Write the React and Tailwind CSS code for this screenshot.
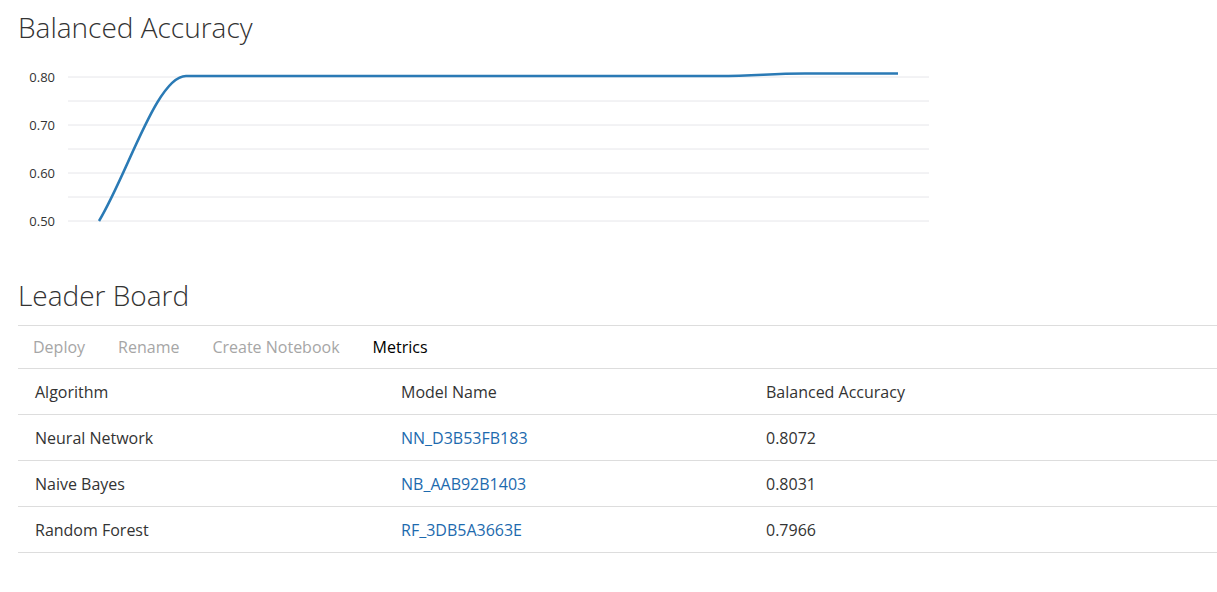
import React from 'react';

const font = { fontFamily: '"Open Sans", "Noto Sans", sans-serif' };

const rows = [
  { algo: 'Neural Network', model: 'NN_D3B53FB183', acc: '0.8072' },
  { algo: 'Naive Bayes', model: 'NB_AAB92B1403', acc: '0.8031' },
  { algo: 'Random Forest', model: 'RF_3DB5A3663E', acc: '0.7966' },
];

const ticks = [
  { y: 18, label: '0.80' },
  { y: 42 },
  { y: 66, label: '0.70' },
  { y: 90 },
  { y: 114, label: '0.60' },
  { y: 138 },
  { y: 162, label: '0.50' },
];

const AccuracyChart = () => (
  <svg width="940" height="175" className="block">
    {ticks.map((t) => (
      <g key={t.y}>
        <line x1="68" x2="929" y1={t.y} y2={t.y} stroke="#e6e6ea" strokeWidth="1" />
        {t.label && (
          <text x="55" y={t.y + 4.5} textAnchor="end" fontSize="13" fill="#333" style={font}>
            {t.label}
          </text>
        )}
      </g>
    ))}
    <path
      d="M99 162 C128 114, 157 17, 186 17 L718 17 C758 17, 768 14.5, 805 14.5 L898 14.5"
      fill="none"
      stroke="#2a7ab5"
      strokeWidth="2.5"
    />
  </svg>
);

export default function App() {
  return (
    <div className="bg-white min-h-screen text-[#333]" style={font}>
      <div className="pl-[18px]">
        <h1 className="text-[28px] font-light leading-none pt-[13px]">Balanced Accuracy</h1>
        <div className="-ml-[18px] mt-[18px]">
          <AccuracyChart />
        </div>

        <h2 className="text-[28px] font-light leading-none mt-[47px]">Leader Board</h2>

        <div className="mt-[16px] border-t border-[#ddd] h-[43px] flex items-center gap-[33px] px-[15px] text-[16px]">
          <span className="text-[#a6a6a6]">Deploy</span>
          <span className="text-[#a6a6a6]">Rename</span>
          <span className="text-[#a6a6a6]">Create Notebook</span>
          <span className="text-black">Metrics</span>
        </div>

        <div className="text-[16px]">
          <div className="grid grid-cols-[366px_365px_1fr] h-[46px] items-center border-t border-[#ddd]">
            <div className="pl-[17px]">Algorithm</div>
            <div className="pl-[17px]">Model Name</div>
            <div className="pl-[17px]">Balanced Accuracy</div>
          </div>
          {rows.map((r) => (
            <div
              key={r.model}
              className="grid grid-cols-[366px_365px_1fr] h-[46px] items-center border-t border-[#ddd]"
            >
              <div className="pl-[17px]">{r.algo}</div>
              <div className="pl-[17px] text-[#1d6aae]">{r.model}</div>
              <div className="pl-[17px]">{r.acc}</div>
            </div>
          ))}
          <div className="border-t border-[#ddd]" />
        </div>
      </div>
    </div>
  );
}
